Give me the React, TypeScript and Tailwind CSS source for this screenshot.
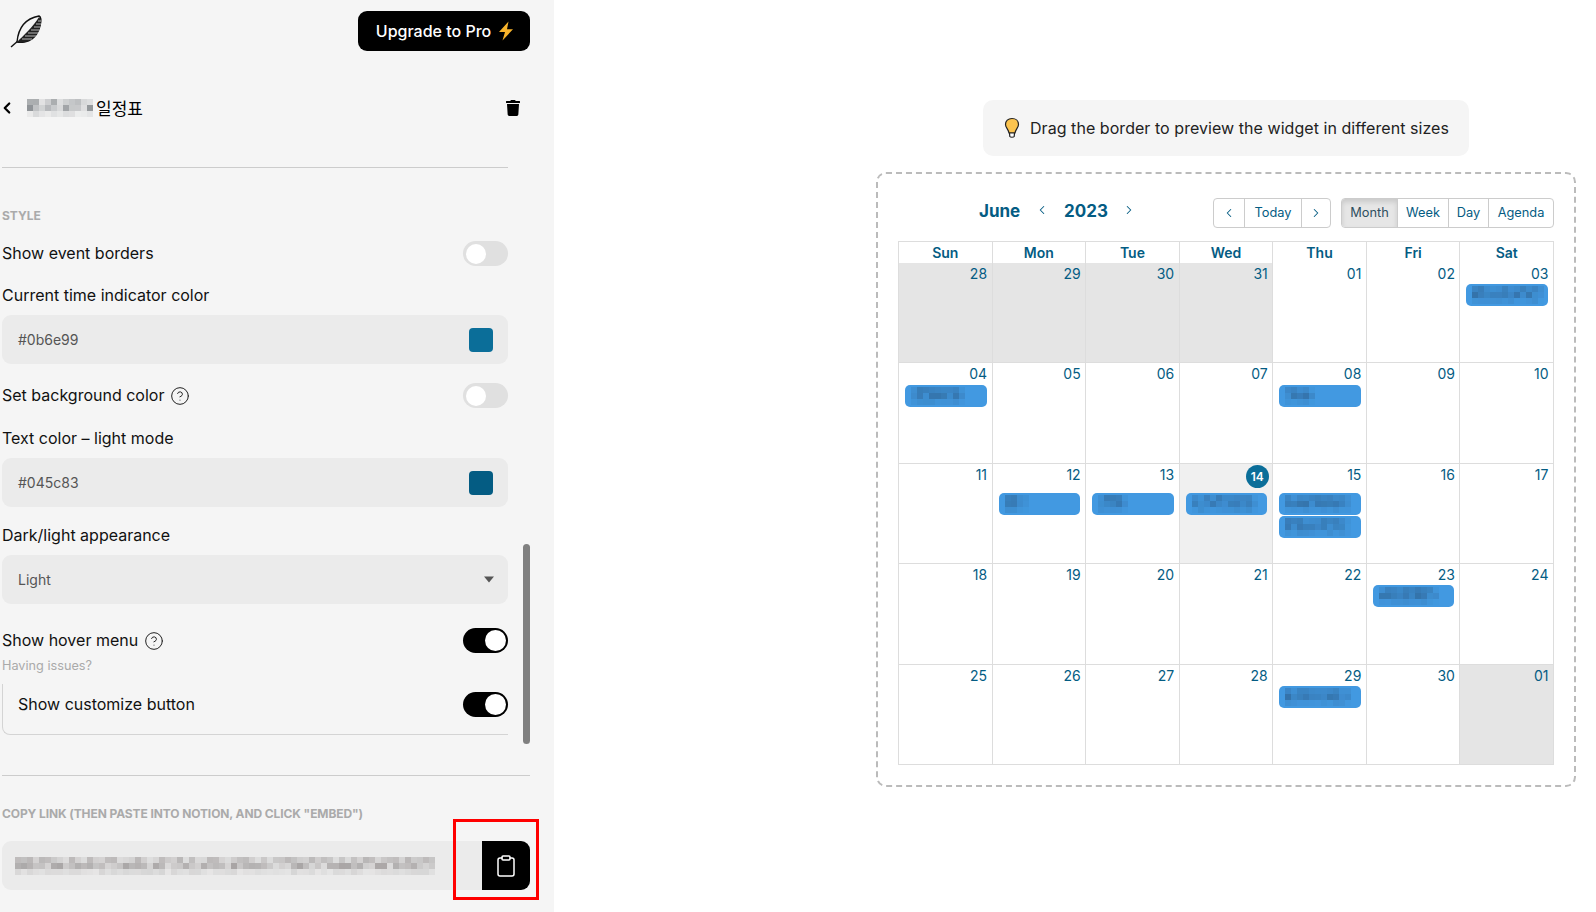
import React from "react";
import { ChevronLeft, ChevronRight, Clipboard, CircleHelp } from "lucide-react";
import { FaTrash } from "react-icons/fa";

const ROW_WEIGHT = [0.75, 1, 0.3];

function Mosaic({ cols, rows, size, seed, rgb, max, fade = 0 }: { cols: number; rows: number; size: number; seed: number; rgb: string; max: number; fade?: number }) {
  let s = seed;
  const next = () => {
    s = (s * 9301 + 49297) % 233280;
    return s / 233280;
  };
  return (
    <div className="flex flex-col shrink-0">
      {Array.from({ length: rows }).map((_, r) => (
        <div key={r} className="flex">
          {Array.from({ length: cols }).map((_, c) => {
            const a = (0.14 + next() * max) * ROW_WEIGHT[r] * (fade && c >= cols - fade ? 0.4 : 1);
            return <div key={c} style={{ width: size, height: size, backgroundColor: `rgba(${rgb},${a})` }} />;
          })}
        </div>
      ))}
    </div>
  );
}

function Toggle({ on }: { on?: boolean }) {
  return on ? (
    <div className="w-[45px] h-[25px] rounded-full bg-black flex justify-end items-center pr-[2px] shrink-0">
      <div className="w-[21px] h-[21px] rounded-full bg-white" />
    </div>
  ) : (
    <div className="w-[45px] h-[25px] rounded-full bg-[#e0e0e0] flex justify-start items-center pl-[3px] shrink-0">
      <div className="w-[20px] h-[20px] rounded-full bg-white" />
    </div>
  );
}

function ColorInput({ value, color }: { value: string; color: string }) {
  return (
    <div className="mt-[10px] h-[49px] w-[506px] rounded-[9px] bg-[#ebebeb] flex items-center justify-between pl-[16px] pr-[15px]">
      <span className="text-[14px] text-[#555]">{value}</span>
      <div className={`w-[24px] h-[24px] rounded-[4px] ${color}`} />
    </div>
  );
}

function Help() {
  return <CircleHelp size={20} strokeWidth={1.2} className="text-[#222] ml-[6px]" />;
}

const DAYS = ["Sun", "Mon", "Tue", "Wed", "Thu", "Fri", "Sat"];

type Cell = { d: string; off?: boolean; today?: boolean; ev?: [number, number][] };
type Row = { h: string; pad: string; cells: Cell[] };

const ROWS: Row[] = [
  {
    h: "h-[100px]",
    pad: "mt-[-1px]",
    cells: [
      { d: "28", off: true }, { d: "29", off: true }, { d: "30", off: true }, { d: "31", off: true },
      { d: "01" }, { d: "02" }, { d: "03", ev: [[12, 11]] },
    ],
  },
  {
    h: "h-[101px]",
    pad: "mt-[0px]",
    cells: [
      { d: "04", ev: [[9, 23]] }, { d: "05" }, { d: "06" }, { d: "07" },
      { d: "08", ev: [[5, 31]] }, { d: "09" }, { d: "10" },
    ],
  },
  {
    h: "h-[100px]",
    pad: "mt-[7px]",
    cells: [
      { d: "11" }, { d: "12", ev: [[4, 41]] }, { d: "13", ev: [[5, 47]] },
      { d: "14", today: true, ev: [[11, 53]] },
      { d: "15", ev: [[11, 59], [11, 67]] }, { d: "16" }, { d: "17" },
    ],
  },
  {
    h: "h-[101px]",
    pad: "mt-[-1px]",
    cells: [
      { d: "18" }, { d: "19" }, { d: "20" }, { d: "21" }, { d: "22" },
      { d: "23", ev: [[10, 73]] }, { d: "24" },
    ],
  },
  {
    h: "h-[100px]",
    pad: "mt-[-1px]",
    cells: [
      { d: "25" }, { d: "26" }, { d: "27" }, { d: "28" },
      { d: "29", ev: [[11, 83]] }, { d: "30" }, { d: "01", off: true },
    ],
  },
];

function Feather() {
  return (
    <svg width="36" height="36" viewBox="0 0 36 36" fill="none" className="block">
      <path d="M1 32 L9 25" stroke="#111" strokeWidth="1.4" />
      <path d="M7 27 C8 16 13 4 29 1 C33 3 30 18 22 24 C18 27 11 28 7 27 Z" fill="#f5f5f5" stroke="#111" strokeWidth="1.4" />
      <path d="M7 27 C13 21 23 12 29 2 C33 6 30 18 22 24 C18 27 11 28 7 27 Z" fill="#222" />
      <g stroke="#ddd" strokeWidth="0.8">
        <path d="M28 6 L31 6" />
        <path d="M26 9 L31 9" />
        <path d="M24 12 L30.5 12" />
        <path d="M21 15 L29.5 15" />
        <path d="M18 18 L28 18" />
        <path d="M15 21 L26 21" />
        <path d="M12 24 L22 24" />
      </g>
    </svg>
  );
}

function Bulb() {
  return (
    <svg width="16" height="22" viewBox="0 0 16 22" className="block shrink-0">
      <path d="M8 1.5 C4 1.5 1.5 4 1.5 7.5 C1.5 10.5 4.5 12.5 5 16 L11 16 C11.5 12.5 14.5 10.5 14.5 7.5 C14.5 4 12 1.5 8 1.5 Z" fill="#fcc44f" stroke="#222" strokeWidth="1.2" />
      <path d="M5.5 16 L5.8 19.5 C6.5 20.5 9.5 20.5 10.2 19.5 L10.5 16 Z" fill="#fff" stroke="#222" strokeWidth="1.2" />
    </svg>
  );
}

export default function App() {
  return (
    <div className="flex w-[1596px] h-[912px] overflow-hidden bg-white font-['Inter',sans-serif] text-[#111]">
      <aside className="relative w-[554px] h-[912px] shrink-0 bg-[#f5f5f5] pl-[2px] flex flex-col">
        <div className="flex justify-between items-start h-[95px] w-[528px]">
          <div className="ml-[8px] mt-[15px]">
            <Feather />
          </div>
          <div className="mt-[11px] h-[40px] w-[172px] rounded-[9px] bg-black text-white flex items-center justify-center gap-[7px] pl-[2px] text-[16px] font-medium">
            Upgrade to Pro
            <svg width="16" height="20" viewBox="0 0 16 18" preserveAspectRatio="none">
              <path d="M10.5 0.5 L1 10 L7 10 L4.5 17.5 L15 7.5 L9 7.5 Z" fill="#f7b32b" />
            </svg>
          </div>
        </div>

        <div className="h-[26px] w-[520px] flex items-center justify-between">
          <div className="flex items-center">
            <ChevronLeft size={18} strokeWidth={3} className="ml-[-4px] text-black" />
            <div className="ml-[11px]">
              <Mosaic cols={11} rows={3} size={6} seed={17} rgb="110,115,120" max={0.65} />
            </div>
            <span className="ml-[3px] text-[17px] font-['Noto_Sans_CJK_KR','Inter',sans-serif] text-black leading-[26px]">일정표</span>
          </div>
          <FaTrash size={16} className="text-black mr-[1px]" />
        </div>

        <div className="mt-[46px] h-px w-[506px] bg-[#ccc]" />

        <div className="mt-[40px] h-[16px] text-[12px] leading-[16px] font-bold text-[#aaa]">STYLE</div>

        <div className="mt-[17px] h-[25px] w-[506px] flex items-center justify-between">
          <span className="text-[16px] mb-[2px]">Show event borders</span>
          <Toggle />
        </div>

        <div className="mt-[19px] h-[20px] text-[16px] leading-[20px]">Current time indicator color</div>
        <ColorInput value="#0b6e99" color="bg-[#0b6e99]" />

        <div className="mt-[19px] h-[25px] w-[506px] flex items-center justify-between">
          <div className="flex items-center">
            <span className="text-[16px] mb-[2px]">Set background color</span>
            <Help />
          </div>
          <Toggle />
        </div>

        <div className="mt-[20px] h-[20px] text-[16px] leading-[20px]">Text color – light mode</div>
        <ColorInput value="#045c83" color="bg-[#045c83]" />

        <div className="mt-[18px] h-[20px] text-[16px] leading-[20px]">Dark/light appearance</div>
        <div className="mt-[10px] h-[49px] w-[506px] rounded-[9px] bg-[#ebebeb] flex items-center justify-between pl-[16px] pr-[13px]">
          <span className="text-[14px] text-[#555]">Light</span>
          <svg width="12" height="7" viewBox="0 0 12 7">
            <path d="M1 0.5 L11 0.5 L6 6.5 Z" fill="#555" />
          </svg>
        </div>

        <div className="mt-[24px] h-[25px] w-[506px] flex items-center justify-between">
          <div className="flex items-center">
            <span className="text-[16px] mb-[2px]">Show hover menu</span>
            <Help />
          </div>
          <Toggle on />
        </div>

        <div className="mt-[5px] h-[16px] text-[12.7px] leading-[16px] text-[#aaa]">Having issues?</div>

        <div className="mt-[10px] h-[51px] w-[506px] border-l border-b border-[#d4d4d4] rounded-bl-[8px] pl-[15px] pt-[8px] flex items-start justify-between">
          <span className="text-[16px] leading-[25px]">Show customize button</span>
          <Toggle on />
        </div>

        <div className="mt-[40px] h-px w-[528px] bg-[#ccc]" />

        <div className="mt-[30px] h-[16px] text-[12px] tracking-[-0.1px] leading-[16px] font-bold text-[#aaa] whitespace-nowrap">
          COPY LINK (THEN PASTE INTO NOTION, AND CLICK "EMBED")
        </div>

        <div className="mt-[19px] h-[49px] w-[528px] rounded-[9px] bg-[#ebebeb] flex items-center justify-between pl-[13px]">
          <Mosaic cols={70} rows={3} size={6} seed={91} rgb="130,125,125" max={0.5} />
          <div className="h-[49px] w-[48px] bg-black rounded-r-[9px] flex items-center justify-center">
            <Clipboard size={24} strokeWidth={1.5} className="text-white" />
          </div>
        </div>

        <div className="absolute left-[523px] top-[544px] w-[7px] h-[200px] rounded-full bg-[#808080]" />
        <div className="absolute left-[453px] top-[819px] w-[86px] h-[81px] border-[3px] border-[#f00]" />
      </aside>

      <main className="flex-1 pl-[322px] flex flex-col items-start">
        <div className="mt-[100px] ml-[107px] h-[56px] w-[486px] rounded-[10px] bg-[#f5f5f5] flex items-center pl-[21px] gap-[10px]">
          <Bulb />
          <span className="text-[16px] tracking-[0.05px] text-[#222] whitespace-nowrap">Drag the border to preview the widget in different sizes</span>
        </div>

        <div className="mt-[16px] w-[700px] h-[615px] border-2 border-dashed border-[#bbb] rounded-[10px] px-[20px] pt-[23px] text-[#045c83]">
          <div className="h-[30px] flex items-center">
            <span className="ml-[81px] text-[17px] font-bold w-[41px]">June</span>
            <ChevronLeft size={14} strokeWidth={1.8} className="ml-[15px] mt-[-4px]" />
            <span className="ml-[15px] text-[17px] font-bold">2023</span>
            <ChevronRight size={14} strokeWidth={1.8} className="ml-[14px] mt-[-4px]" />
            <div className="ml-auto mt-[1px] flex h-[30px] w-[118px] border border-[#ccc] rounded-[4px] text-[12.8px]">
              <div className="w-[31px] flex items-center justify-center border-r border-[#ccc]">
                <ChevronLeft size={14} strokeWidth={1.8} />
              </div>
              <div className="w-[57px] flex items-center justify-center border-r border-[#ccc]">Today</div>
              <div className="flex-1 flex items-center justify-center">
                <ChevronRight size={14} strokeWidth={1.8} />
              </div>
            </div>
            <div className="ml-[10px] mt-[1px] flex h-[30px] w-[213px] border border-[#ccc] rounded-[4px] text-[12.8px]">
              <div className="w-[56px] flex items-center justify-center border-r border-[#ccc] bg-[#e6e6e6] shadow-[inset_0_3px_5px_rgba(0,0,0,0.125)] text-[#2f4f5f] rounded-l-[3px]">Month</div>
              <div className="w-[51px] flex items-center justify-center border-r border-[#ccc]">Week</div>
              <div className="w-[40px] flex items-center justify-center border-r border-[#ccc]">Day</div>
              <div className="flex-1 flex items-center justify-center">Agenda</div>
            </div>
          </div>

          <div className="mt-[14px] w-[656px] border-l border-t border-[#ddd]">
            <div className="grid grid-cols-7 h-[21px]">
              {DAYS.map((d) => (
                <div key={d} className="border-r border-[#ddd] text-center text-[14px] font-semibold leading-[21px]">
                  {d}
                </div>
              ))}
            </div>
            {ROWS.map((row, i) => (
              <div key={i} className={`grid grid-cols-7 ${row.h}`}>
                {row.cells.map((c, j) => (
                  <div
                    key={j}
                    className={`border-r border-b border-[#ddd] min-w-0 ${c.off ? "bg-[#e5e5e5]" : c.today ? "bg-[#f0f0f0]" : ""}`}
                  >
                    <div className="h-[22px] flex justify-end pr-[4.5px] text-[14px] leading-[22px]">
                      {c.today ? (
                        <span className="mt-[1px] mr-[-1px] w-[23px] h-[23px] rounded-full bg-[#0b6e99] text-white text-[12px] font-semibold flex items-center justify-center">
                          {c.d}
                        </span>
                      ) : (
                        c.d
                      )}
                    </div>
                    <div className={`flex flex-col gap-px ${row.pad}`}>
                      {c.ev?.map(([cols, seed], k) => (
                        <div key={k} className="ml-[6px] mr-[5px] h-[22px] rounded-[5px] bg-[#4299e1] flex items-center pl-[6px]">
                          <Mosaic cols={cols} rows={3} size={6} seed={seed} rgb="40,80,120" max={0.4} fade={1} />
                        </div>
                      ))}
                    </div>
                  </div>
                ))}
              </div>
            ))}
          </div>
        </div>
      </main>
    </div>
  );
}
